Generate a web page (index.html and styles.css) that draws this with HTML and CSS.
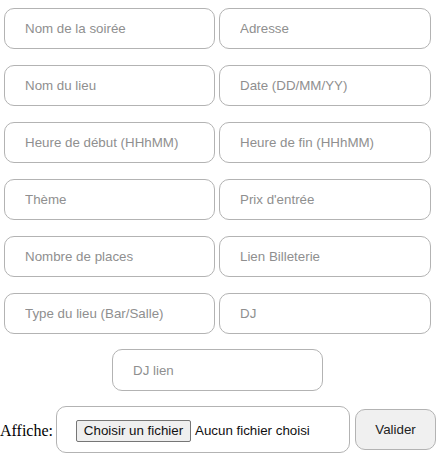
FILE: index.html
```html
<!DOCTYPE html>
<html lang="fr">
<head>
<meta charset="utf-8">
<link rel="stylesheet" href="styles.css">
</head>
<body>
<form class="form">
  <div class="grid">
    <input class="field" type="text" placeholder="Nom de la soirée">
    <input class="field" type="text" placeholder="Adresse">
    <input class="field" type="text" placeholder="Nom du lieu">
    <input class="field" type="text" placeholder="Date (DD/MM/YY)">
    <input class="field" type="text" placeholder="Heure de début (HHhMM)">
    <input class="field" type="text" placeholder="Heure de fin (HHhMM)">
    <input class="field" type="text" placeholder="Thème">
    <input class="field" type="text" placeholder="Prix d'entrée">
    <input class="field" type="text" placeholder="Nombre de places">
    <input class="field" type="text" placeholder="Lien Billeterie">
    <input class="field" type="text" placeholder="Type du lieu (Bar/Salle)">
    <input class="field" type="text" placeholder="DJ">
  </div>
  <div class="center-row">
    <input class="field single" type="text" placeholder="DJ lien">
  </div>
  <div class="bottom-row">
    <span class="label">Affiche:</span>
    <div class="file-box">
      <span class="file-btn">Choisir un fichier</span>
      <span class="file-text">Aucun fichier choisi</span>
    </div>
    <button class="submit" type="button">Valider</button>
  </div>
</form>
</body>
</html>
```
FILE: styles.css
```css
html, body {
  margin: 0;
  padding: 0;
  background: #ffffff;
}
.form {
  width: 431px;
  padding-top: 8px;
}
.grid {
  display: grid;
  grid-template-columns: 211px 212px;
  column-gap: 4px;
  row-gap: 16px;
  padding-left: 4px;
}
.field {
  box-sizing: border-box;
  height: 41px;
  margin: 0;
  padding: 0 20px;
  border: 1px solid #b3b3b3;
  border-radius: 10px;
  font-family: "Liberation Sans", Arial, sans-serif;
  font-size: 13.33px;
  color: #222;
  background: #fff;
  outline: none;
}
.field::placeholder {
  color: #8f8f8f;
}
.center-row {
  display: flex;
  justify-content: center;
  padding-left: 4px;
  margin-top: 15px;
}
.single {
  width: 211px;
  height: 42px;
}
.bottom-row {
  display: flex;
  align-items: center;
  margin-top: 15px;
  width: 439px;
}
.label {
  flex: none;
  font-family: "Liberation Serif", "Times New Roman", serif;
  font-size: 16px;
  color: #000;
  width: 56px;
  padding-top: 3px;
}
.file-box {
  flex: none;
  box-sizing: border-box;
  width: 294px;
  height: 47px;
  border: 1px solid #b3b3b3;
  border-radius: 10px;
  padding: 0 19px;
  display: flex;
  align-items: center;
  font-family: "Liberation Sans", Arial, sans-serif;
  font-size: 13.33px;
  color: #111;
}
.file-btn {
  box-sizing: border-box;
  height: 22px;
  width: 115px;
  display: flex;
  align-items: center;
  justify-content: center;
  background: #efefef;
  border: 1px solid #767676;
  border-radius: 2px;
  margin-right: 4px;
  margin-top: 2px;
}
.file-text {
  margin-top: 2px;
}
.submit {
  flex: none;
  box-sizing: border-box;
  width: 81px;
  height: 41px;
  margin: 0 0 0 5px;
  padding: 0;
  border: 1px solid #b3b3b3;
  border-radius: 10px;
  background: #f0f0f0;
  font-family: "Liberation Sans", Arial, sans-serif;
  font-size: 13.33px;
  color: #222;
}
```
